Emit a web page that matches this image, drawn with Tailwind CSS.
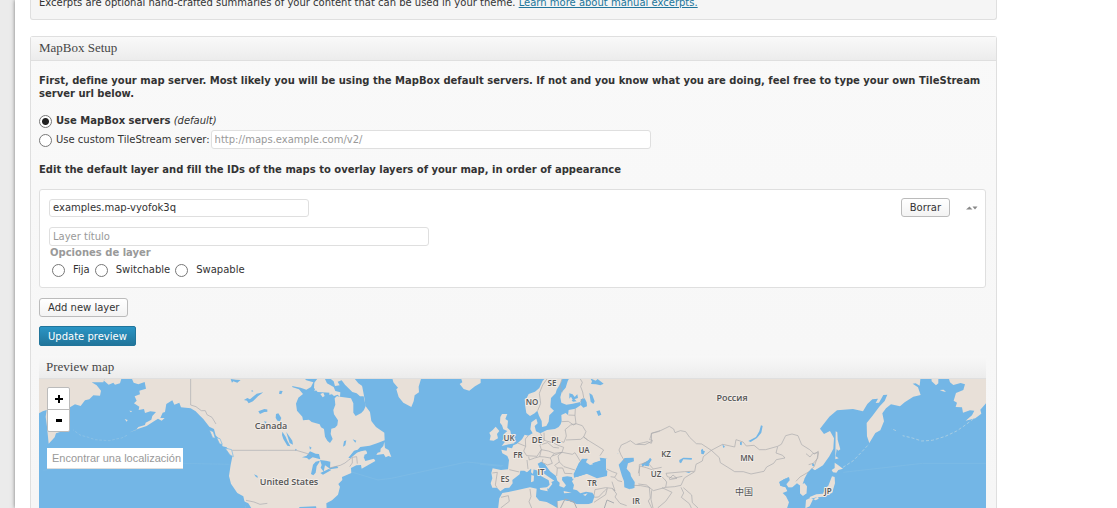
<!DOCTYPE html>
<html lang="es">
<head>
<meta charset="utf-8">
<title>MapBox Setup</title>
<script src="https://cdn.jsdelivr.net/npm/@tailwindcss/browser@4"></script>
</head>
<body class="bg-[#ebebeb] font-['DejaVu_Sans',sans-serif] text-[10px] leading-[13px] text-[#333]">
<div class="ml-[15px] flex h-screen flex-col overflow-hidden bg-white pr-[120px] pl-[15px] shadow-[0_0_4px_rgba(0,0,0,0.5)]">
  <section class="flex h-5 shrink-0 flex-col justify-end rounded-b-[3px] border border-t-0 border-[#dfdfdf] bg-[#f5f5f5] px-2 pb-2.5">
    <p>Excerpts are optional hand-crafted summaries of your content that can be used in your theme. <a href="#" class="text-[#21759b] underline">Learn more about manual excerpts.</a></p>
  </section>

  <section class="mt-4 flex flex-1 flex-col rounded-t-[3px] border border-b-0 border-[#dfdfdf] bg-linear-to-b from-[#f9f9f9] to-[#f6f6f6]">
    <h3 class="h-6 shrink-0 border-b border-[#dfdfdf] bg-linear-to-b from-[#f9f9f9] to-[#ececec] px-2 font-['Liberation_Serif',serif] text-[13px] leading-[22px] text-[#464646]">MapBox Setup</h3>
    <div class="flex flex-1 flex-col px-2 pr-[10px]">
      <p class="mt-[13px] font-bold">First, define your map server. Most likely you will be using the MapBox default servers. If not and you know what you are doing, feel free to type your own TileStream server url below.</p>
      <div class="mt-[13px] flex h-[15px] items-center gap-1">
        <input type="radio" name="server" id="s1" checked class="mt-0.5 size-[13px] shrink-0 appearance-none rounded-full border border-[#777] bg-white bg-[radial-gradient(circle,#222_3px,transparent_4px)]">
        <label for="s1"><strong>Use MapBox servers</strong> <em>(default)</em></label>
      </div>
      <div class="mt-0.5 flex h-[19px] items-center gap-px">
        <input type="radio" name="server" id="s2" class="mt-0.5 mr-[3px] size-[13px] shrink-0 appearance-none rounded-full border border-[#777] bg-white">
        <label for="s2">Use custom TileStream server:</label>
        <input type="text" aria-label="TileStream server URL" placeholder="http://maps.example.com/v2/" class="h-[19px] w-[440px] rounded-[3px] border border-[#dfdfdf] bg-white px-[3px] placeholder:text-[#999]">
      </div>
      <p class="mt-3.5 font-bold">Edit the default layer and fill the IDs of the maps to overlay layers of your map, in order of appearance</p>

      <div class="mt-[13px] h-[99px] shrink-0 rounded-[3px] border border-[#dfdfdf] bg-white px-[9px] pt-2">
        <div class="flex h-[19px] items-center">
          <input type="text" aria-label="Layer ID" value="examples.map-vyofok3q" class="h-[18px] w-[260px] rounded-[3px] border border-[#dfdfdf] px-[3px]">
          <button type="button" class="ml-auto h-[19px] rounded-[3px] border border-[#bbb] bg-linear-to-b from-white to-[#f3f3f3] px-2">Borrar</button>
          <button type="button" aria-label="Reordenar" class="mr-[-2px] ml-4 w-3"><svg viewBox="0 0 12 4" class="h-1 w-3" fill="#888"><path d="M0 3.5L3.5.5L6.5 3.5ZM6.500.5H11.500L9 3.500Z"/></svg></button>
        </div>
        <input type="text" aria-label="Layer título" placeholder="Layer título" class="mt-2.5 block h-[19px] w-[380px] rounded-[3px] border border-[#dfdfdf] px-[3px] placeholder:text-[#999]">
        <fieldset>
          <legend class="mt-0.5 px-px font-bold text-[#999]">Opciones de layer</legend>
          <div class="mt-[3px] flex h-[14px] items-center pl-[3px]">
            <input type="radio" name="type" id="t1" class="mt-0.5 mr-2 size-[13px] appearance-none rounded-full border border-[#777] bg-white"><label for="t1" class="mr-[5px]">Fija</label>
            <input type="radio" name="type" id="t2" class="mt-0.5 mr-2 size-[13px] appearance-none rounded-full border border-[#777] bg-white"><label for="t2" class="mr-[5px]">Switchable</label>
            <input type="radio" name="type" id="t3" class="mt-0.5 mr-2 size-[13px] appearance-none rounded-full border border-[#777] bg-white"><label for="t3">Swapable</label>
          </div>
        </fieldset>
      </div>

      <button type="button" class="mt-2.5 h-[19px] shrink-0 self-start rounded-[3px] border border-[#bbb] bg-linear-to-b from-white to-[#f3f3f3] px-2">Add new layer</button>
      <button type="button" class="mt-[9px] h-5 shrink-0 self-start rounded-[2px] border border-[#21759b] bg-linear-to-b from-[#2a95c5] to-[#21759b] px-2 text-white">Update preview</button>

      <h3 class="mt-2.5 h-[23px] shrink-0 border-b border-[#dfdfdf] bg-linear-to-b from-[#f8f8f8] to-[#ececec] pl-[7px] font-['Liberation_Serif',serif] text-[13px] leading-[22px] text-[#464646]">Preview map</h3>
      <div class="relative min-h-0 flex-1 overflow-hidden bg-[#73b6e6]">
        <svg class="absolute inset-0 size-full" viewBox="39 379 947 129" preserveAspectRatio="xMinYMin slice" role="img" aria-label="Mapa">
          <!-- Bering Sea, Alaska and the Pacific coast -->
          <g transform="translate(30 350) scale(.3333)" fill="#e8e0d8">
            <path d="M20 80H225L220 97L185 97L200 106L213 122L210 137L190 136L178 148L165 151L152 168L135 163L120 172L104 178L98 222L90 246L78 250L74 262L56 281L51 230L47 200L50 180L38 184L27 190Z"/>
            <path d="M225 80L222 92L236 104L250 98L255 104L270 100L276 80Z"/>
            <path d="M303 80L311 98L325 103L344 96L348 116L328 122L330 133L314 139L320 152L312 160L328 170L326 180L342 177L345 189L361 184L378 186L367 198L364 209L347 218L345 225L325 231L318 240L296 248L325 236L350 228L372 214L384 206L395 212L404 204L391 204L398 188L405 186L409 162L427 151L433 164L448 158L453 172L482 175L497 184L510 197L520 207L538 230L552 237L557 256L570 270L578 289L590 292L607 320L602 345L597 378L603 401L622 429L640 439L648 474H735V80Z"/>
            <path d="M291 256L275 264L258 267L240 272L218 271L195 269L175 262L150 255L130 240" fill="none" stroke="#94c4e4" stroke-width="2" stroke-dasharray="8 5"/>
            <path d="M284 207l9 3-3 5zM298 182l8 1-3 4z"/>
            <path d="M538 240l12 5 6 20-8-2zM560 263l10 3 7 17-8-1zM585 294l20 5 5 21-10-5z" stroke="#73b6e6" stroke-width="2"/>
            <path d="M482 80V165L498 170L514 182L526 182L531 194L546 202L558 222M607 301H735M648 451L672 456L690 463L720 459L735 466" fill="none" stroke="#a9abb0" stroke-width="2"/>
            <path d="M602 87l16 2 14 1-10 8-12-4-4 4zM642 150l10-6 8 4 20-17 20-4-16 12-15 15-13 6-5-8zM662 123l6-2 2 4zM685 184l18-7 32 5-20 3-12 1-13 6zM672 373l10 4 2 6-6-2zM702 214l8 1-3 7zM640 453l15 7 10 16h-17z" fill="#73b6e6"/>
            <path d="M40 361L140 345M455 340L598 343" fill="none" stroke="#7dbbe6" stroke-width="2"/>
          </g>
          <!-- Eastern North America, Greenland and Iceland -->
          <g transform="translate(270 370) scale(.3333)" fill="#e8e0d8">
            <path d="M-8 20H290L284 27L276 46L284 88L286 107L300 126L304 153L318 171L343 188L344 211L323 219L299 227L271 231L263 239L252 242L237 262L257 247L288 241L292 250L281 261L286 273L312 266L316 273L275 296L273 285L259 286L243 294L244 309L216 321L217 330L205 342L210 350L204 374L186 391L169 400L170 417H-8Z"/>
            <path d="M343 215L345 234L356 240L364 261L355 258L347 262L341 252L319 255L323 248L331 246L332 236L340 228ZM314 187l13-4 14 4-10 5z" />
            <path d="M366 20L370 37L384 53L379 58L386 81L400 98L424 111L431 94L434 76L447 67L446 50L453 27V20ZM572 20L577 37L569 42L581 57L598 62L615 49L632 39V20Z"/>
            <g fill="#73b6e6">
              <path d="M66 48L92 53L109 59L123 51L130 37L109 31L103 25H143L133 38L132 54L143 66L181 68L192 78L203 74L210 81L201 78L194 85L196 104L190 120L192 133L204 151L202 166L195 173L184 176L182 192L188 207L180 219L172 212L165 200L162 177L153 172L149 163L125 156L117 149L99 151L97 140L81 122L78 101L85 83L99 72L87 58L68 52Z"/>
              <path d="M164 25L171 40L191 51L196 63L211 67L210 80L243 85L250 100L250 128L257 138L274 129L282 120L287 108L281 79L270 79L260 70L247 66L225 44L215 31L203 35L209 46L195 48L191 34L180 25ZM253 25l12 15 20 14 4-29z"/>
              <path d="M18 132l7-2 9 14-4 10-8-2-5-9zM29 62l9 1-4 10-7-2zM37 185l10 15 5 12 9 17-9-2-12-20-4-12zM49 186l18 26 2 12-10-5-7-22zM75 236l6 3-4 4zM118 229l7 4-5 6zM222 214l7-3-3 15-7 4zM248 208l11 4-3 6z"/>
              <path d="M96 262l14-5 10-13 17 7 10 1 4 16-23-6-11 7-6-5zM148 272l-11 3-8 9-6 28 7 4 7-8 3-19 9-14zM150 270l18 2 13 3-1 21-15-10-4 19-9-12 3-8zM151 309l25-12 8 3-25 14zM178 294l23-6 4 6-25 4zM235 263l20-20 40-10 37-15-9 20-11 15 3 15-12-7-3 6-10-2-8-10 9-4 4-9-15-3-19 9-20 17z"/>
              <path d="M88 411l50-2 2 9H88z"/>
            </g>
            <path d="M141 34l8-6 6 11 13 4-15 3-6 10-14 8 4-14zM151 72l9-4 4 10-6 4zM178 66l6-2 2 9-8 1z"/>
            <path d="M-8 241H79L113 251L124 260M178 294L211 286L225 279L235 271L247 262L260 260L262 281M247 262L247 279L239 290" fill="none" stroke="#a9abb0" stroke-width="2"/>
            <path d="M245 306L324 330L364 325L590 276L700 287" fill="none" stroke="#80bce5" stroke-width="2"/>
          </g>
          <!-- Europe, North Africa and Western Asia -->
          <g transform="translate(480 370) scale(.3333)" fill="#e8e0d8">
            <path d="M201 20L188 32L178 54L165 65L146 72L140 84L134 87L136 110L139 129L150 138L164 130L172 122L177 137L185 153L186 171L199 168L206 155L208 136L222 122L211 112L213 84L227 70L230 59L242 40L247 27V20ZM270 20L263 34L257 53L245 67L241 82L244 98L259 104L278 101L301 96L303 105L286 116L266 120L264 135L257 129L244 135L245 154L242 163L236 171L225 177L201 180L181 190L168 184L164 168L173 160L169 146L154 157L151 178L158 190L145 197L134 194L126 208L111 221L100 226L96 235L82 232L80 242L64 239L67 250L82 258L87 270L84 298L63 300L38 295L34 309L37 325L32 340L37 353L51 353L61 364L75 354L88 353L98 340L97 330L119 313L121 302L133 302L141 307L153 296L170 301L183 318L206 331L209 344L199 353L205 357L217 342L214 336L223 332L199 316L181 303L177 290L173 281L184 275L195 283L210 304L228 318L232 332L239 338L238 348L252 353L258 346L246 330L247 321L262 319L276 321L278 328L291 321L285 312L287 300L296 280L307 266L322 268L333 281L364 271L361 263L383 266L403 271L414 250L421 262L432 264L460 261L461 273L443 280L437 297L449 312L455 317L463 336L463 353L449 358L433 352L432 334L425 313L401 303L379 297L380 312L350 317L327 309L302 317L284 323L276 334L282 345L279 358L291 361L301 370L318 365L337 368L344 378L337 398L320 404L291 403L266 393L247 399L242 414H700V20Z"/>
            <path d="M417 250H463V353L436 359L378 331V266Z"/>
            <path d="M54 418L58 385L67 369L85 366L113 360L150 352L170 356L168 380L178 392L200 396L217 405L232 414V394L250 390L266 394L290 403L338 402L340 418Z"/>
            <path d="M61 141L66 132H82L76 147L84 152L82 173L91 182L94 198L106 204L103 220L81 224L65 228L75 215L66 212L75 202L72 192L82 183L70 178L66 166L60 158ZM47 170L58 183L51 192L54 205L41 212L29 211L32 197L28 188L38 180Z"/>
            <path d="M154 293l7 4-2 15-6-5zM154 315l8 2-1 17-8 3zM179 354l22-2 2 12-22-5zM251 363l24 5-23 2zM309 374l14-4-7 8z"/>
            <g fill="#73b6e6">
              <path d="M331 25l16 7 6-5 18 14-10 5-13-3-15-1 3-8zM302 88l12-3 6 12 1 12-11 4-7-7zM328 69l9 6 7 19-4 8-8-7zM349 124l10-3 5 13-9 4zM268 70l10 3 6 8 8-8 2 11-16 5-5-9-5 6zM275 91l8-4 7 7-11 1z"/>
              <path d="M297 282l9-15 16-1 12 15 28-8-3-10 14 3-3 10-12 10 24 17-1 15-30 7-31-14-24 8-14 4-1-12z"/>
              <path d="M416 284l18-20 27-1 1 11-18 6-4 16 11 13 2 10 11 17-1 18-16 3-14-5-1-18-6-16zM484 283l21-12 5-8 4 6-8 16-6-6-12 12z"/>
            </g>
            <path d="M322 268l-4 9 12 8 9-2-6-10z"/>
            <g fill="none" stroke="#a9a9ac" stroke-width="2">
              <path d="M173 122L182 100L178 70L188 45L201 27M247 67L240 45L246 27M301 96L311 82L308 66L302 50L307 37L301 27M286 116L285 136L288 161L307 167L318 185L311 201L323 210L357 231L371 240L360 257"/>
              <path d="M265 135L285 136M245 155L265 154L281 165L288 161M254 180L272 165L288 161M256 180L259 198L252 217L222 208M258 210L302 208L311 201L323 210M192 188L193 211L180 226L184 239L171 259L140 257L131 243L137 229L113 219M137 229L136 207L144 198M181 190L193 211L220 219L237 227L251 232L246 247L223 250L205 243L184 239M186 223L203 218L220 232L237 234M184 239L179 260L164 264L148 270L146 260M223 250L211 264L193 261L179 260M211 264L217 280L203 285L186 277L189 267M217 258L246 247L277 253L285 248L302 275M246 247L234 258L238 276L252 290L285 300M238 276L224 286L232 294L248 294L254 310L277 311M232 294L230 318M141 270L144 297M37 309L52 307L46 345L51 353M88 299L118 306"/>
              <path d="M380 297L397 305L411 310L404 322L392 320M404 322L414 332L426 335M396 335L405 363L396 355L377 353L345 359L342 376M343 382L356 381L373 363L382 355L377 374L342 397M397 355L410 372L405 381L420 400L440 407M63 382L85 377L88 394L62 414M150 357L153 380L147 395L155 414M231 394L233 414M461 346L482 347L508 352L511 384L505 393L515 414"/>
              <path d="M435 275L423 255L417 240L424 225L440 218L451 212L466 223L495 224L515 214L514 190L540 182M478 318V284L501 276L520 297L545 292"/>
            </g>
            <path d="M0 283L65 289" fill="none" stroke="#80bce5" stroke-width="2"/>
          </g>
          <path d="M560 509L565 499L574 502L577 509M604 509L607 500L614 503" fill="none" stroke="#a9abb0"/>
          <!-- Central and East Asia -->
          <path d="M700 375H988V520H700Z" fill="#e8e0d8"/>
          <g transform="translate(640 370) scale(.3333)">
            <path d="M540 295L521 303L512 319L494 325L488 342L499 350L499 370L489 378L480 370L481 347L471 340L457 352L441 355L435 347L449 333L447 321L432 328L418 336L421 347L437 352L443 363L428 369L438 379L447 397L440 418H540Z" fill="#73b6e6"/>
            <path d="M480 347l13-8 8 10-2 22-12 5-6-8zM418 341l16-13 14-9 2 16-12 9-14 4z" fill="#e8e0d8"/>
            <path d="M418 336L432 328L447 321L449 331L439 343L445 352L457 354L470 347L480 347L479 371L465 400H450L443 365L437 352L421 347Z" fill="#73b6e6"/>
            <g fill="#73b6e6"><path d="M363 166l5 2-4 20-13 16-19 12-7-3 23-12 10-17zM118 270l12-7 26 1-1 5-25-1-7 12-5-3zM18 278l14-13 3 5-9 10 1 9-14-2zM183 240l5-4 2 6 5 2-4 9-7-1zM300 216l6 1-1 9-5-2zM247 223l8 7-5 4zM137 306l16-1-6 4zM516 280l7 1-1 8-5-1z"/></g>
            <g fill="none" stroke="#a9a9ac" stroke-width="2">
              <path d="M-8 222L10 218L22 215L34 220L37 211L29 209L35 190L55 185L78 174L88 169L101 177L105 188L121 182L137 185L149 202L169 221L185 222L214 241L248 223L284 231L288 209L309 216L319 228L342 226L358 239L377 239L413 229L424 223L437 197L456 192L474 197L485 224L509 239L523 252L535 244L532 263L523 289L509 304L480 321L468 334"/>
              <path d="M214 241L190 260L187 273L168 283L164 305L133 324L123 346L104 350L77 352L80 336L73 327L62 318L43 302L19 293L0 288L-5 310M214 241L238 263L241 278L270 296L284 305H310L333 312L372 304L380 291L401 280L409 269L435 264L428 256L408 249L413 230M127 319L99 325L82 320L78 310L133 305L162 304M77 352L40 362L19 345L-5 342M35 361L33 388L39 414M66 353L96 367L77 394L53 414M123 352L131 369L124 382L148 401L154 414M130 353L155 375L157 398L174 414M87 327L99 315L111 325L88 329"/>
            </g>
          </g>
          <g transform="translate(810 370) scale(.3333)" fill="#73b6e6">
            <path d="M535 20H332L329 47L317 40L308 41L324 52L332 75L310 80L284 97L270 109L243 103L228 115L217 130L222 154L211 181L196 189L178 219L171 199L170 159L187 138L209 109L224 93L232 74L220 75L207 98L197 99L204 86L187 88L172 102L159 124L129 117L81 121L58 140L30 176L42 192L60 183L72 205L70 236L58 259L39 286L15 301L5 295L-8 310L-16 325L-5 345V420H535Z"/>
            <g fill="#e8e0d8">
              <path d="M364 20L365 34L378 46L385 40V20ZM415 20L420 37L430 45L452 39L465 43L460 60L438 69L431 92L441 98L437 111L456 112L459 128L480 121L493 122L486 136L467 152L496 145L514 131L511 119L535 92V20ZM389 60l12-1 7 7-10-2zM77 184l5 3 1 22 8 29-6 4-5-5-3 22 9 6-10 3zM74 278l9 6 16 12-14 4-6 8-10-1-4-7 9-6zM66 319l8 2 1 19-5 16-3 12-25 12-22 2-20 5-1-6 20-8 20-2 7-16 9-8 7-18zM10 388l14-8 2 6-9 5zM-12 390l12-6 9 4-10 21-13 6z"/>
            </g>
            <path d="M99 292L130 272L155 246L177 222M490 147L462 168L440 183L406 199L367 211L335 213L307 204L278 197M258 182L244 176" fill="none" stroke="#a6cce2" stroke-width="3" stroke-dasharray="9 6"/>
            <path d="M100 307L338 280H528" fill="none" stroke="#80bce5" stroke-width="2"/>
            <path d="M-12 251L0 261L8 251L25 248L23 265L10 280L-4 284" fill="none" stroke="#a9a9ac" stroke-width="2"/>
          </g>
          <g class="font-['Open_Sans','Noto_Sans_CJK_SC',sans-serif] font-semibold" font-size="8" fill="#555" stroke="#f1ece7" stroke-width="2" paint-order="stroke" stroke-linejoin="round" text-anchor="middle">
            <g font-size="9"><text x="271" y="429">Canada</text><text x="289" y="485">United States</text><text x="732" y="401">Россия</text><text x="744" y="495" class="font-normal">中国</text></g>
            <text x="552" y="386">SE</text><text x="532" y="405">NO</text><text x="509" y="441">UK</text><text x="537" y="443">DE</text><text x="556" y="443">PL</text><text x="518" y="458">FR</text><text x="584" y="453">UA</text><text x="541" y="475">IT</text><text x="505" y="482">ES</text><text x="592" y="486">TR</text><text x="636" y="504">IR</text><text x="666" y="457">KZ</text><text x="656" y="477">UZ</text><text x="747" y="461">MN</text><text x="828" y="494">JP</text>
          </g>
        </svg>
        <div class="absolute top-2 left-2 flex w-[23px] flex-col rounded-[2px] border border-[#bbb] bg-white">
          <button type="button" aria-label="Acercar" class="flex h-[22px] items-center justify-center border-b border-[#bbb]"><svg viewBox="0 0 8 8" class="size-2"><path d="M0 3h3V0h2v3h3v2H5v3H3V5H0z"/></svg></button>
          <button type="button" aria-label="Alejar" class="flex h-[21px] items-center justify-center"><svg viewBox="0 0 6 3" class="h-[3px] w-1.5"><path d="M0 0h6v3H0z"/></svg></button>
        </div>
        <input type="text" aria-label="Encontrar una localización" placeholder="Encontrar una localización" class="absolute top-[69px] left-2 h-[21px] w-[136px] border-b border-[#ddd] bg-white pl-[5px] font-['Liberation_Sans',sans-serif] text-[11px] placeholder:text-[#999]">
      </div>
    </div>
  </section>
</div>
</body>
</html>
